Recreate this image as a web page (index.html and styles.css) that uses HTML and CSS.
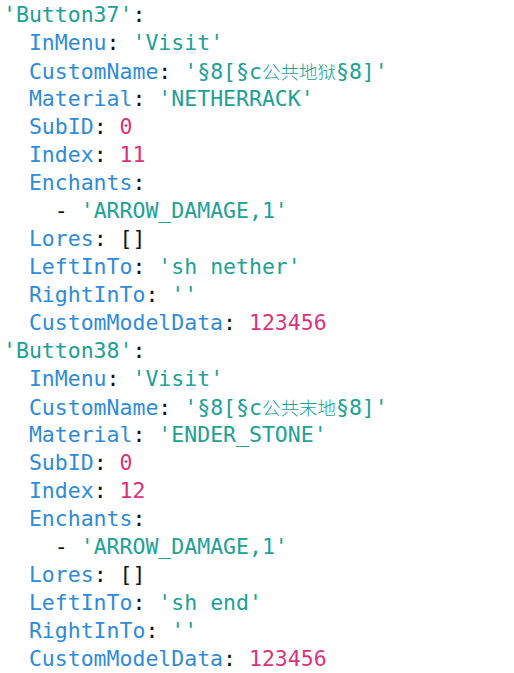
FILE: index.html
```html
<!DOCTYPE html>
<html>
<head>
<meta charset="utf-8">
<link rel="stylesheet" href="styles.css">
</head>
<body>
<div class="code">
<div class="line"><span class="s">'Button37'</span><span class="p">:</span></div>
<div class="line">  <span class="k">InMenu</span><span class="p">:</span> <span class="s">'Visit'</span></div>
<div class="line">  <span class="k">CustomName</span><span class="p">:</span> <span class="s">'§8[§c<span class="cjk">公共地狱</span>§8]'</span></div>
<div class="line">  <span class="k">Material</span><span class="p">:</span> <span class="s">'NETHERRACK'</span></div>
<div class="line">  <span class="k">SubID</span><span class="p">:</span> <span class="n">0</span></div>
<div class="line">  <span class="k">Index</span><span class="p">:</span> <span class="n">11</span></div>
<div class="line">  <span class="k">Enchants</span><span class="p">:</span></div>
<div class="line">    <span class="p">-</span> <span class="s">'ARROW_DAMAGE,1'</span></div>
<div class="line">  <span class="k">Lores</span><span class="p">:</span> <span class="p">[]</span></div>
<div class="line">  <span class="k">LeftInTo</span><span class="p">:</span> <span class="s">'sh nether'</span></div>
<div class="line">  <span class="k">RightInTo</span><span class="p">:</span> <span class="s">''</span></div>
<div class="line">  <span class="k">CustomModelData</span><span class="p">:</span> <span class="n">123456</span></div>
<div class="line"><span class="s">'Button38'</span><span class="p">:</span></div>
<div class="line">  <span class="k">InMenu</span><span class="p">:</span> <span class="s">'Visit'</span></div>
<div class="line">  <span class="k">CustomName</span><span class="p">:</span> <span class="s">'§8[§c<span class="cjk">公共末地</span>§8]'</span></div>
<div class="line">  <span class="k">Material</span><span class="p">:</span> <span class="s">'ENDER_STONE'</span></div>
<div class="line">  <span class="k">SubID</span><span class="p">:</span> <span class="n">0</span></div>
<div class="line">  <span class="k">Index</span><span class="p">:</span> <span class="n">12</span></div>
<div class="line">  <span class="k">Enchants</span><span class="p">:</span></div>
<div class="line">    <span class="p">-</span> <span class="s">'ARROW_DAMAGE,1'</span></div>
<div class="line">  <span class="k">Lores</span><span class="p">:</span> <span class="p">[]</span></div>
<div class="line">  <span class="k">LeftInTo</span><span class="p">:</span> <span class="s">'sh end'</span></div>
<div class="line">  <span class="k">RightInTo</span><span class="p">:</span> <span class="s">''</span></div>
<div class="line">  <span class="k">CustomModelData</span><span class="p">:</span> <span class="n">123456</span></div>
</div>
</body>
</html>
```
FILE: styles.css
```css
html, body {
  margin: 0;
  padding: 0;
  background: #ffffff;
}
.code {
  padding: 1px 0 0 3px;
  font-family: "DejaVu Sans Mono", "Liberation Mono", monospace;
  font-size: 21.5px;
  line-height: 28px;
  color: #111111;
}
.line {
  white-space: pre;
  height: 28px;
}
.k { color: #2f8bd8; }
.s { color: #21a096; }
.n { color: #d6337f; }
.p { color: #111111; }
.cjk {
  font-family: "Noto Sans CJK SC", sans-serif;
  font-size: 18.5px;
  font-weight: 300;
}
```
